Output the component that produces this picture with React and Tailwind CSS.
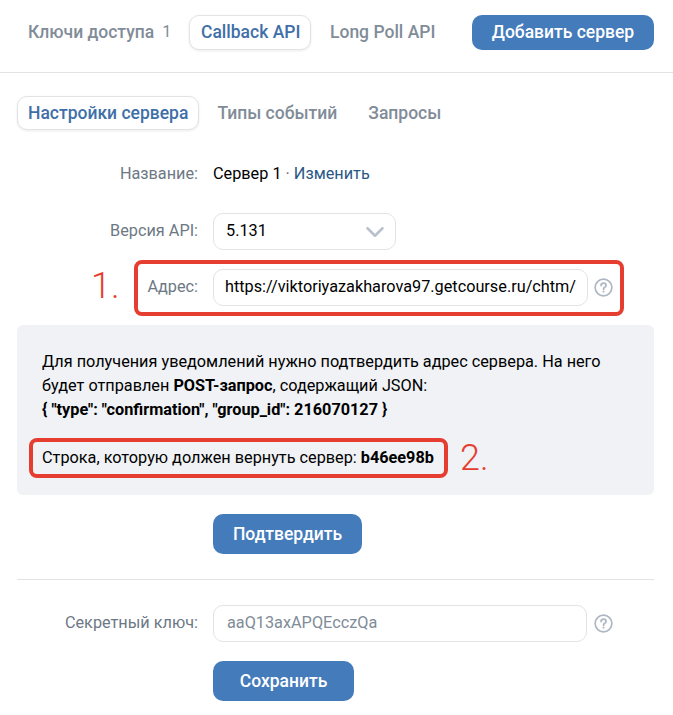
import { ChevronDown } from 'lucide-react'

function HelpIcon() {
  return (
    <svg width="19" height="19" viewBox="0 0 20 20" fill="none" className="shrink-0">
      <circle cx="10" cy="10" r="8.8" stroke="#aeb7c2" strokeWidth="1.8" />
      <path d="M7.4 8c0-1.6 1.2-2.6 2.7-2.6S12.7 6.300 12.700 7.800c0 1.900-2.700 2-2.700 4" stroke="#aeb7c2" strokeWidth="1.800" strokeLinecap="round" />
      <circle cx="10" cy="14.300" r="1.100" fill="#aeb7c2" />
    </svg>
  )
}

function Row({ label, className, children }) {
  return (
    <div className={`flex items-center ${className}`}>
      <div className="w-[198px] shrink-0 text-right text-[#6d7885]">{label}</div>
      <div className="ml-[15px] flex items-center">{children}</div>
    </div>
  )
}

export default function App() {
  return (
    <div className="w-[673px] h-[715px] overflow-hidden bg-white text-[16.25px] text-black" style={{ fontFamily: 'Roboto, sans-serif' }}>
      {/* Top tabs */}
      <div className="flex items-start h-[73px] border-b border-[#e1e3e6] pt-[15px] pl-[17px] pr-[19px] text-[17.5px] font-medium whitespace-nowrap">
        <div className="h-[35px] flex items-center pl-[11px] w-[169px] text-[#818c99]">
          Ключи доступа <span className="ml-[8px] text-[16.25px] font-normal">1</span>
        </div>
        <div className="ml-[3px] w-[122px] h-[35px] flex items-center pl-[11px] text-[#3f6fa8] bg-white border border-[#e1e3e6] rounded-[10px] shadow-[0_1px_3px_rgba(0,0,0,0.08)]">
          Callback API
        </div>
        <div className="h-[35px] flex items-center px-[19px] text-[#818c99]">Long Poll API</div>
        <button className="ml-auto h-[35px] w-[182px] rounded-[10px] bg-[#447bba] text-white">Добавить сервер</button>
      </div>

      {/* Sub tabs */}
      <div className="flex items-center h-[34px] mt-[23px] ml-[17px] text-[17.5px] font-medium whitespace-nowrap">
        <div className="h-[34px] flex items-center px-[10px] text-[#3f6fa8] bg-white border border-[#e1e3e6] rounded-[10px] shadow-[0_1px_3px_rgba(0,0,0,0.08)]">
          Настройки сервера
        </div>
        <div className="ml-[18px] text-[#818c99]">Типы событий</div>
        <div className="ml-[31px] text-[#818c99]">Запросы</div>
      </div>

      <Row label="Название:" className="mt-[34px] h-[20px]">
        <span>Сервер 1</span>
        <span className="text-[#626d7a]">&nbsp;·&nbsp;</span>
        <span className="text-[#2a5885]">Изменить</span>
      </Row>

      <Row label="Версия API:" className="mt-[29px]">
        <div className="w-[183px] h-[37px] flex items-center justify-between pl-[12px] pr-[5px] border border-[#e1e3e6] rounded-[10px]">
          <span>5.131</span>
          <ChevronDown size={30} color="#b8c1cc" strokeWidth={2} />
        </div>
      </Row>

      {/* Address row with annotation 1 */}
      <div className="relative mt-[19px]">
        <Row label="Адрес:">
          <div className="w-[375px] h-[37px] flex items-center pl-[11px] border border-[#e1e3e6] rounded-[10px] whitespace-nowrap overflow-hidden">
            https://viktoriyazakharova97.getcourse.ru/chtm/
          </div>
          <span className="ml-[6px]"><HelpIcon /></span>
        </Row>
        <div className="absolute left-[134px] top-[-9px] w-[490px] h-[56px] border-[4px] border-[#e53e30] rounded-[8px]" />
        <div className="absolute left-[91px] top-[-4px] text-[36px] leading-[42px] font-light text-[#e53e30]">1.</div>
      </div>

      {/* Confirmation panel */}
      <div className="mt-[19px] mx-[17px] w-[637px] h-[170px] bg-[#f0f2f5] rounded-[6px] px-[25px] pt-[25px] leading-[24px]">
        <div className="whitespace-nowrap">Для получения уведомлений нужно подтвердить адрес сервера. На него</div>
        <div>будет отправлен <b className="font-bold">POST-запрос</b>, содержащий JSON:</div>
        <div className="font-bold">{'{ "type": "confirmation", "group_id": 216070127 }'}</div>
        <div className="relative mt-[24px]">
          Строка, которую должен вернуть сервер: <b className="font-bold">b46ee98b</b>
          <div className="absolute left-[-13px] top-[-8px] w-[419px] h-[40px] border-[4px] border-[#e53e30] rounded-[8px]" />
          <div className="absolute left-[418px] top-[-9px] text-[36px] leading-[42px] font-light text-[#e53e30]">2.</div>
        </div>
      </div>

      <div className="mt-[19px] ml-[213px]">
        <button className="h-[40px] w-[149px] rounded-[10px] bg-[#447bba] text-white font-medium text-[17.5px]">Подтвердить</button>
      </div>

      <div className="mt-[25px] mx-[17px] w-[637px] border-t border-[#e1e3e6]" />

      <Row label="Секретный ключ:" className="mt-[25px]">
        <div className="w-[374px] h-[37px] flex items-center pl-[13px] border border-[#e1e3e6] rounded-[10px] text-[#818c99]">aaQ13axAPQEcczQa</div>
        <span className="ml-[7px]"><HelpIcon /></span>
      </Row>

      <div className="mt-[19px] ml-[213px]">
        <button className="h-[40px] w-[141px] rounded-[10px] bg-[#447bba] text-white font-medium text-[17.5px]">Сохранить</button>
      </div>
    </div>
  )
}
